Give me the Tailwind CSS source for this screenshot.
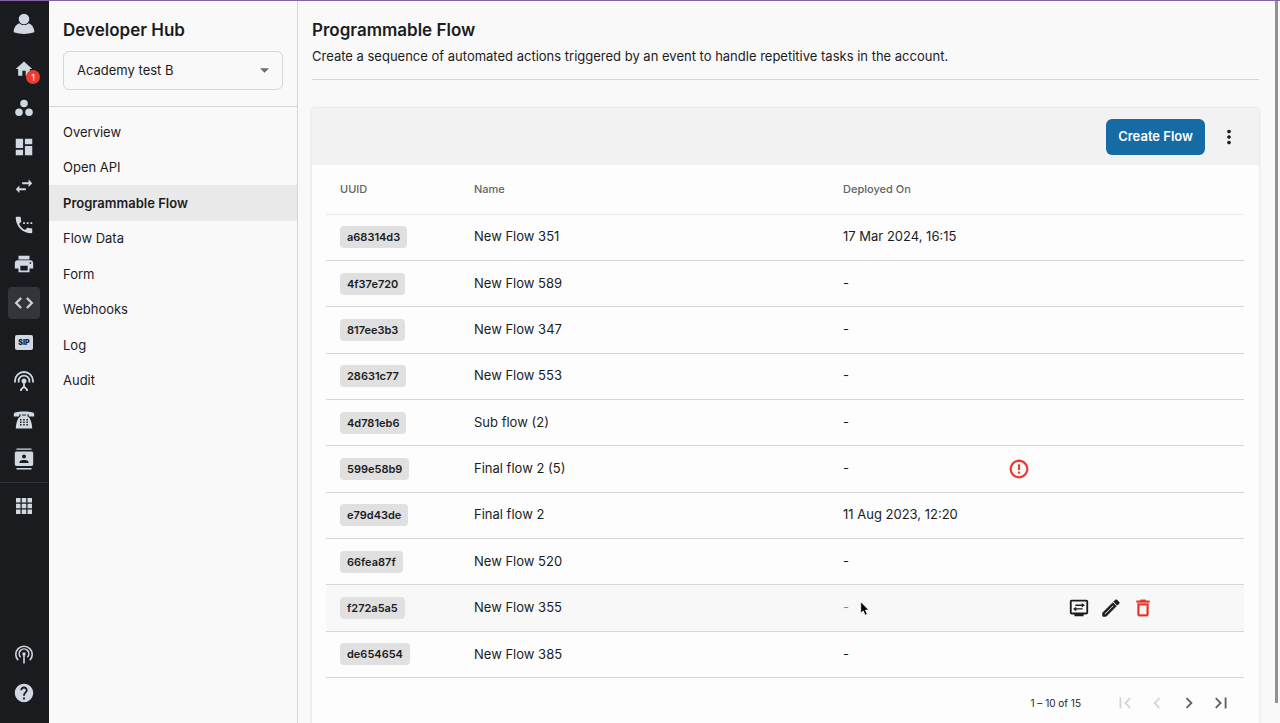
<!DOCTYPE html>
<html lang="en">

<head>
    <meta charset="UTF-8">
    <meta name="viewport" content="width=device-width, initial-scale=1.0">
    <title>Developer Hub - Programmable Flow</title>
    <script src="https://cdn.jsdelivr.net/npm/@tailwindcss/browser@4"></script>
</head>

<body class="relative flex h-screen overflow-hidden border-t border-[#8460ab] bg-[#f9f9f9] font-['Inter',sans-serif] text-[13px] text-[#1c1c1e]">
    <!-- Icon rail -->
    <nav class="flex w-[49px] shrink-0 flex-col items-center bg-[#1a1b1f] pt-[7px] pr-px pb-[14px] text-[#d0d8e2]" aria-label="Main">
        <a href="#" class="flex size-8 items-center justify-center" aria-label="Profile">
            <svg class="size-[22px]" viewBox="0 0 22 22" fill="currentColor"><circle cx="11" cy="6" r="5.3"/><path d="M6.3 10.2C3 11.4 1 14.6.6 18.2c-.1.7.2 1.1.8 1.3 6 1.9 13.2 1.9 19.2 0 .6-.2.9-.6.8-1.3C21 14.6 19 11.4 15.7 10.2c-2.5 2.5-6.9 2.5-9.4 0z"/></svg>
        </a>
        <div class="mt-[13px] flex flex-col gap-[7px]">
            <a href="#" class="relative flex size-8 items-center justify-center" aria-label="Home">
                <svg class="size-5" viewBox="0 0 24 24" fill="currentColor"><path d="M10 20v-6h4v6h5v-8h3L12 3 2 12h3v8z"/></svg>
                <span class="absolute right-0 bottom-[1px] flex size-[14px] items-center justify-center rounded-full bg-[#ee3a30] text-[9px] leading-none text-white">1</span>
            </a>
            <a href="#" class="flex size-8 items-center justify-center" aria-label="Teams">
                <svg class="size-5" viewBox="0 0 24 24" fill="currentColor"><circle cx="6" cy="17" r="4.5"/><circle cx="18" cy="17" r="4.5"/><circle cx="12" cy="6.5" r="4.5"/></svg>
            </a>
            <a href="#" class="flex size-8 items-center justify-center" aria-label="Dashboard">
                <svg class="size-[22px]" viewBox="0 0 24 24" fill="currentColor"><path d="M3 13h8V3H3v10zm0 8h8v-6H3v6zm10 0h8V11h-8v10zm0-18v6h8V3h-8z"/></svg>
            </a>
            <a href="#" class="flex size-8 items-center justify-center" aria-label="Transfers">
                <svg class="size-[22px]" viewBox="0 0 24 24" fill="currentColor"><path d="M21 9l-4-4v3h-7v2h7v3l4-4zM3 15.500l4 4v-3h7v-2H7v-3l-4 4z"/></svg>
            </a>
            <a href="#" class="flex size-8 items-center justify-center" aria-label="Calls">
                <svg class="size-[22px]" viewBox="0 0 24 24" fill="currentColor"><path d="M11 9h2v2h-2V9zm4 0h2v2h-2V9zm5 6.500c-1.250 0-2.450-.2-3.570-.57-.35-.11-.74-.03-1.020.24l-2.200 2.200c-2.830-1.440-5.150-3.750-6.590-6.580l2.200-2.210c.28-.27.36-.66.25-1.010C8.700 6.450 8.500 5.250 8.500 4c0-.55-.45-1-1-1H4c-.55 0-1 .45-1 1 0 9.390 7.610 17 17 17 .55 0 1-.45 1-1v-3.500c0-.55-.45-1-1-1zM19 9v2h2V9h-2z"/></svg>
            </a>
            <a href="#" class="flex size-8 items-center justify-center" aria-label="Print">
                <svg class="size-[22px]" viewBox="0 0 24 24" fill="currentColor"><path d="M19 8H5c-1.660 0-3 1.340-3 3v6h4v4h12v-4h4v-6c0-1.660-1.340-3-3-3zm-3 11H8v-5h8v5zm3-7c-.55 0-1-.45-1-1s.45-1 1-1 1 .45 1 1-.45 1-1 1zm-1-9H6v4h12V3z"/></svg>
            </a>
            <a href="#" class="flex size-8 items-center justify-center rounded bg-[#34353a]" aria-label="Developer Hub">
                <svg class="size-[22px]" viewBox="0 0 24 24" fill="currentColor" stroke="currentColor" stroke-width=".5"><path d="M9.400 16.600L4.800 12l4.600-4.600L8 6l-6 6 6 6 1.400-1.400zm5.200 0l4.600-4.600-4.600-4.600L16 6l6 6-6 6-1.400-1.400z"/></svg>
            </a>
            <a href="#" class="flex size-8 items-center justify-center" aria-label="SIP">
                <span class="flex h-[15px] w-[18px] items-center justify-center rounded-xs bg-[#d0d8e2] text-[7px] leading-none font-black text-[#1a1b1f]">SIP</span>
            </a>
            <a href="#" class="flex size-8 items-center justify-center" aria-label="Broadcast">
                <svg class="size-5" viewBox="0 0 20 20" fill="none" stroke="currentColor" stroke-width="1.8"><path d="M1 11.500V10a9 9 0 0 1 18 0v1.500"/><path d="M4.600 11.500V10a5.400 5.400 0 0 1 10.800 0v1.500"/><circle cx="10" cy="10" r="2.500" fill="currentColor" stroke="none"/><path d="M10 11v5M7 20v-1.500l3-3 3 3V20"/></svg>
            </a>
            <a href="#" class="flex size-8 items-center justify-center" aria-label="Telephone">
                <svg class="size-[22px]" viewBox="0 0 22 22" fill="currentColor"><path d="M.8 7.500V5.200C.8 3.500 3.500 2.500 11 2.500s10.200 1 10.200 2.700v2.300h-5.400V5.600H6.200v1.900z"/><path fill-rule="evenodd" d="M7.500 5.200h1.700v1.400h3.600V5.200h1.700v2.300c2 .8 3.100 3 4.100 7 .4 1.500.6 3 .6 5H2.800c0-2 .2-3.500.6-5 1-4 2.100-6.200 4.100-7zM7 10h1.500v1.500H7zm3.200 0h1.500v1.500h-1.500zm3.200 0h1.500v1.500h-1.500zM7 12.500h1.500V14H7zm3.200 0h1.500V14h-1.500zm3.200 0h1.500V14h-1.500zM7 15h1.500v1.500H7zm3.200 0h1.500v1.500h-1.500zm3.200 0h1.500v1.500h-1.500z"/></svg>
            </a>
            <a href="#" class="flex size-8 items-center justify-center" aria-label="Contacts">
                <svg class="size-[22px]" viewBox="0 0 22 22" fill="currentColor"><path fill-rule="evenodd" d="M3.500.5h15v1.300h-15zM3.500 20h15v1.600h-15zM3.500 3.500h15c1 0 1.700.7 1.700 1.700v11c0 1-.7 1.700-1.700 1.700h-15c-1 0-1.700-.7-1.700-1.700v-11c0-1 .7-1.700 1.700-1.700zM11 6.500a2 2 0 1 0 0 4 2 2 0 0 0 0-4zm-4.500 8.500h9v-1c0-1.300-2.500-1.900-4.500-1.900s-4.500.6-4.500 1.900z"/></svg>
            </a>
        </div>
        <hr class="mt-[7px] w-full border-[#323338]">
        <a href="#" class="mt-[7px] flex size-8 items-center justify-center" aria-label="Apps">
            <svg class="size-4" viewBox="0 0 16 16" fill="currentColor"><path d="M0 0h4.500v4.500H0zM5.750 0h4.500v4.500h-4.500zM11.500 0H16v4.500h-4.500zM0 5.750h4.500v4.500H0zM5.750 5.750h4.500v4.500h-4.500zM11.500 5.750H16v4.500h-4.500zM0 11.500h4.500V16H0zM5.750 11.500h4.500V16h-4.500zM11.500 11.500H16V16h-4.500z"/></svg>
        </a>
        <div class="mt-auto flex flex-col gap-[7px]">
            <a href="#" class="flex size-8 items-center justify-center" aria-label="Status">
                <svg class="size-5" viewBox="0 0 20 20" fill="none" stroke="currentColor" stroke-width="1.600"><path d="M4.200 16.200a8.200 8.200 0 1 1 11.600 0"/><path d="M6.600 13.200a4.800 4.800 0 1 1 6.800 0"/><circle cx="10" cy="10" r="1.700" fill="currentColor" stroke="none"/><path d="M10 10v9.500"/></svg>
            </a>
            <a href="#" class="flex size-8 items-center justify-center" aria-label="Help">
                <svg class="size-[22px]" viewBox="0 0 24 24" fill="currentColor"><path d="M12 2C6.480 2 2 6.480 2 12s4.480 10 10 10 10-4.480 10-10S17.520 2 12 2zm1 17h-2v-2h2v2zm2.070-7.750l-.9.920C13.450 12.900 13 13.500 13 15h-2v-.5c0-1.100.45-2.100 1.170-2.830l1.240-1.260c.37-.36.59-.86.59-1.410 0-1.100-.9-2-2-2s-2 .9-2 2H8c0-2.210 1.790-4 4-4s4 1.790 4 4c0 .88-.36 1.680-.93 2.250z"/></svg>
            </a>
        </div>
    </nav>

    <!-- Developer Hub menu -->
    <aside class="w-[249px] shrink-0 border-r border-[#d6d6d6]">
        <div class="border-b border-[#d6d6d6] px-[14px] pt-[17px] pb-4">
            <h2 class="text-[17px] leading-6 font-semibold">Developer Hub</h2>
            <div class="relative mt-[9px]">
                <select aria-label="Account" class="h-[39px] w-full appearance-none rounded-md border border-[#d6d6d6] px-[13px]">
                    <option>Academy test B</option>
                </select>
                <svg class="pointer-events-none absolute top-[17px] right-[14px] h-[5px] w-[9px] text-[#6b6b6b]" viewBox="0 0 10 5" fill="currentColor"><path d="M0 0h10L5 5z"/></svg>
            </div>
        </div>
        <ul class="pt-[7px]">
            <li><a href="#" class="flex h-9 items-center px-[14px] pt-px">Overview</a></li>
            <li><a href="#" class="flex h-[35px] items-center px-[14px] pt-px">Open API</a></li>
            <li><a href="#" class="flex h-9 items-center bg-[#e9e9e9] px-[14px] pt-px font-semibold">Programmable Flow</a></li>
            <li><a href="#" class="flex h-[35px] items-center px-[14px] pt-px">Flow Data</a></li>
            <li><a href="#" class="flex h-9 items-center px-[14px] pt-px">Form</a></li>
            <li><a href="#" class="flex h-[35px] items-center px-[14px] pt-px">Webhooks</a></li>
            <li><a href="#" class="flex h-9 items-center px-[14px] pt-px">Log</a></li>
            <li><a href="#" class="flex h-[35px] items-center px-[14px] pt-px">Audit</a></li>
        </ul>
    </aside>

    <!-- Content -->
    <main class="min-w-0 flex-1 pr-[21px] pl-[14px]">
        <header class="border-b border-[#d6d6d6] pt-[17px] pb-[13px]">
            <h1 class="text-[17px] leading-6 font-semibold">Programmable Flow</h1>
            <p class="mt-1 leading-5">Create a sequence of automated actions triggered by an event to handle repetitive tasks in the account.</p>
        </header>

        <section class="mt-7 rounded-xs bg-[#fdfdfd] pb-8 shadow-[0_0_3px_rgba(0,0,0,0.15)]">
            <div class="flex h-[57px] items-center justify-end gap-3 bg-[#f2f2f2] pr-[18px]">
                <button type="button" class="h-9 rounded-md bg-[#176ba5] px-3 font-semibold text-white">Create Flow</button>
                <button type="button" class="flex size-6 items-center justify-center" aria-label="More options">
                    <svg class="size-[22px]" viewBox="0 0 24 24" fill="currentColor"><path d="M12 8c1.100 0 2-.9 2-2s-.9-2-2-2-2 .9-2 2 .9 2 2 2zm0 2c-1.100 0-2 .9-2 2s.9 2 2 2 2-.9 2-2-.9-2-2-2zm0 6c-1.100 0-2 .9-2 2s.9 2 2 2 2-.9 2-2-.9-2-2-2z"/></svg>
                </button>
            </div>

            <div class="pr-[15px] pl-[14px]">
                <table class="h-[513px] w-full table-fixed text-left">
                    <thead class="text-[11px] text-[#646464]">
                        <tr class="h-[49px] border-b border-[#ececec]">
                            <th class="w-[148px] pl-[14px] font-medium">UUID</th>
                            <th class="w-[369px] font-medium">Name</th>
                            <th class="w-[166px] font-medium">Deployed On</th>
                            <th class="w-[59px]"></th>
                            <th></th>
                        </tr>
                    </thead>
                    <tbody>
                        <tr class="h-[46px] border-b border-[#d6d6d6]">
                            <td class="pl-[14px]"><span class="inline-block rounded bg-[#e0e0e0] px-[7px] text-[11px] leading-[22px] font-semibold">a68314d3</span></td>
                            <td>New Flow 351</td>
                            <td>17 Mar 2024, 16:15</td>
                            <td></td>
                            <td></td>
                        </tr>
                        <tr class="h-[46px] border-b border-[#d6d6d6]">
                            <td class="pl-[14px]"><span class="inline-block rounded bg-[#e0e0e0] px-[7px] text-[11px] leading-[22px] font-semibold">4f37e720</span></td>
                            <td>New Flow 589</td>
                            <td>-</td>
                            <td></td>
                            <td></td>
                        </tr>
                        <tr class="h-[46px] border-b border-[#d6d6d6]">
                            <td class="pl-[14px]"><span class="inline-block rounded bg-[#e0e0e0] px-[7px] text-[11px] leading-[22px] font-semibold">817ee3b3</span></td>
                            <td>New Flow 347</td>
                            <td>-</td>
                            <td></td>
                            <td></td>
                        </tr>
                        <tr class="h-[46px] border-b border-[#d6d6d6]">
                            <td class="pl-[14px]"><span class="inline-block rounded bg-[#e0e0e0] px-[7px] text-[11px] leading-[22px] font-semibold">28631c77</span></td>
                            <td>New Flow 553</td>
                            <td>-</td>
                            <td></td>
                            <td></td>
                        </tr>
                        <tr class="h-[46px] border-b border-[#d6d6d6]">
                            <td class="pl-[14px]"><span class="inline-block rounded bg-[#e0e0e0] px-[7px] text-[11px] leading-[22px] font-semibold">4d781eb6</span></td>
                            <td>Sub flow (2)</td>
                            <td>-</td>
                            <td></td>
                            <td></td>
                        </tr>
                        <tr class="h-[46px] border-b border-[#d6d6d6]">
                            <td class="pl-[14px]"><span class="inline-block rounded bg-[#e0e0e0] px-[7px] text-[11px] leading-[22px] font-semibold">599e58b9</span></td>
                            <td>Final flow 2 (5)</td>
                            <td>-</td>
                            <td>
                                <svg class="-ml-px size-[22px] text-[#e53529]" viewBox="0 0 24 24" fill="currentColor" stroke="currentColor" stroke-width=".4" role="img" aria-label="Error"><path d="M11 15h2v2h-2zm0-8h2v6h-2zm.99-5C6.470 2 2 6.480 2 12s4.470 10 9.990 10C17.520 22 22 17.520 22 12S17.520 2 11.990 2zM12 20c-4.420 0-8-3.580-8-8s3.580-8 8-8 8 3.580 8 8-3.580 8-8 8z"/></svg>
                            </td>
                            <td></td>
                        </tr>
                        <tr class="h-[46px] border-b border-[#d6d6d6]">
                            <td class="pl-[14px]"><span class="inline-block rounded bg-[#e0e0e0] px-[7px] text-[11px] leading-[22px] font-semibold">e79d43de</span></td>
                            <td>Final flow 2</td>
                            <td>11 Aug 2023, 12:20</td>
                            <td></td>
                            <td></td>
                        </tr>
                        <tr class="h-[46px] border-b border-[#d6d6d6]">
                            <td class="pl-[14px]"><span class="inline-block rounded bg-[#e0e0e0] px-[7px] text-[11px] leading-[22px] font-semibold">66fea87f</span></td>
                            <td>New Flow 520</td>
                            <td>-</td>
                            <td></td>
                            <td></td>
                        </tr>
                        <tr class="h-[46px] border-b border-[#d6d6d6] bg-[#f8f8f8]">
                            <td class="pl-[14px]"><span class="inline-block rounded bg-[#e0e0e0] px-[7px] text-[11px] leading-[22px] font-semibold">f272a5a5</span></td>
                            <td>New Flow 355</td>
                            <td>
                                <div class="relative text-[#8a8a8a]">-
                                    <svg class="absolute top-[3px] left-[17px] h-[15px] w-[10px]" viewBox="0 0 10 15"><path d="M.7.8v11.400l2.500-2.300 1.900 4.300 2.200-1-1.900-4.100h3.500z" fill="#000" stroke="#fff" stroke-width=".8"/></svg>
                                </div>
                            </td>
                            <td></td>
                            <td>
                                <div class="flex gap-[10px]">
                                    <button type="button" aria-label="Configure">
                                        <svg class="size-[22px]" viewBox="0 0 24 24" fill="currentColor"><path fill-rule="evenodd" d="M4 3h16c1.100 0 2 .9 2 2v12c0 1.100-.9 2-2 2h-3v2H7v-2H4c-1.100 0-2-.9-2-2V5c0-1.100.9-2 2-2zm0 2v12h16V5zM15 6.500L18.500 9 15 11.500V9.700H8V8.300h7zM9 10.500v1.800h7v1.400H9v1.800L5.500 13z"/></svg>
                                    </button>
                                    <button type="button" aria-label="Edit">
                                        <svg class="size-[22px]" viewBox="0 0 24 24" fill="currentColor"><path d="M14.060 9.020l.92.920L5.920 19H5v-.92l9.060-9.060M17.660 3c-.25 0-.51.1-.7.290l-1.830 1.830 3.750 3.750 1.830-1.830c.39-.39.39-1.020 0-1.410l-2.340-2.340c-.2-.2-.45-.29-.71-.29zm-3.600 3.190L3 17.250V21h3.750L17.810 9.940l-3.750-3.750z" stroke="currentColor" stroke-width=".9"/></svg>
                                    </button>
                                    <button type="button" class="text-[#e53529]" aria-label="Delete">
                                        <svg class="size-[22px]" viewBox="0 0 24 24" fill="currentColor" stroke="currentColor" stroke-width=".4"><path d="M6 19c0 1.100.9 2 2 2h8c1.100 0 2-.9 2-2V7H6v12zM8 9h8v10H8V9zm7.500-5l-1-1h-5l-1 1H5v2h14V4z"/></svg>
                                    </button>
                                </div>
                            </td>
                        </tr>
                        <tr class="h-[46px] border-b border-[#d6d6d6]">
                            <td class="pl-[14px]"><span class="inline-block rounded bg-[#e0e0e0] px-[7px] text-[11px] leading-[22px] font-semibold">de654654</span></td>
                            <td>New Flow 385</td>
                            <td>-</td>
                            <td></td>
                            <td></td>
                        </tr>
                    </tbody>
                </table>
            </div>

            <!-- Paginator -->
            <div class="flex h-[50px] items-center justify-end pr-[22px] text-[10px] text-[#1c1c1e]">
                <span class="mr-7">1 – 10 of 15</span>
                <div class="flex text-[#5f5f5f]">
                    <button type="button" disabled class="flex size-8 items-center justify-center text-[#d4d4d4]" aria-label="First page">
                        <svg class="size-[22px]" viewBox="0 0 24 24" fill="currentColor"><path d="M18.410 16.590L13.820 12l4.590-4.590L17 6l-6 6 6 6zM6 6h2v12H6z"/></svg>
                    </button>
                    <button type="button" disabled class="flex size-8 items-center justify-center text-[#d4d4d4]" aria-label="Previous page">
                        <svg class="size-[22px]" viewBox="0 0 24 24" fill="currentColor"><path d="M15.410 7.410L14 6l-6 6 6 6 1.410-1.410L10.830 12z"/></svg>
                    </button>
                    <button type="button" class="flex size-8 items-center justify-center" aria-label="Next page">
                        <svg class="size-[22px]" viewBox="0 0 24 24" fill="currentColor"><path d="M10 6L8.590 7.410 13.170 12l-4.580 4.590L10 18l6-6z"/></svg>
                    </button>
                    <button type="button" class="flex size-8 items-center justify-center" aria-label="Last page">
                        <svg class="size-[22px]" viewBox="0 0 24 24" fill="currentColor"><path d="M5.590 7.410L10.180 12l-4.590 4.590L7 18l6-6-6-6zM16 6h2v12h-2z"/></svg>
                    </button>
                </div>
            </div>
        </section>
    </main>

    <!-- Scroll thumb -->
    <div class="absolute top-0 right-[2px] bottom-5 w-[3px] bg-[#919191]"></div>
</body>

</html>
